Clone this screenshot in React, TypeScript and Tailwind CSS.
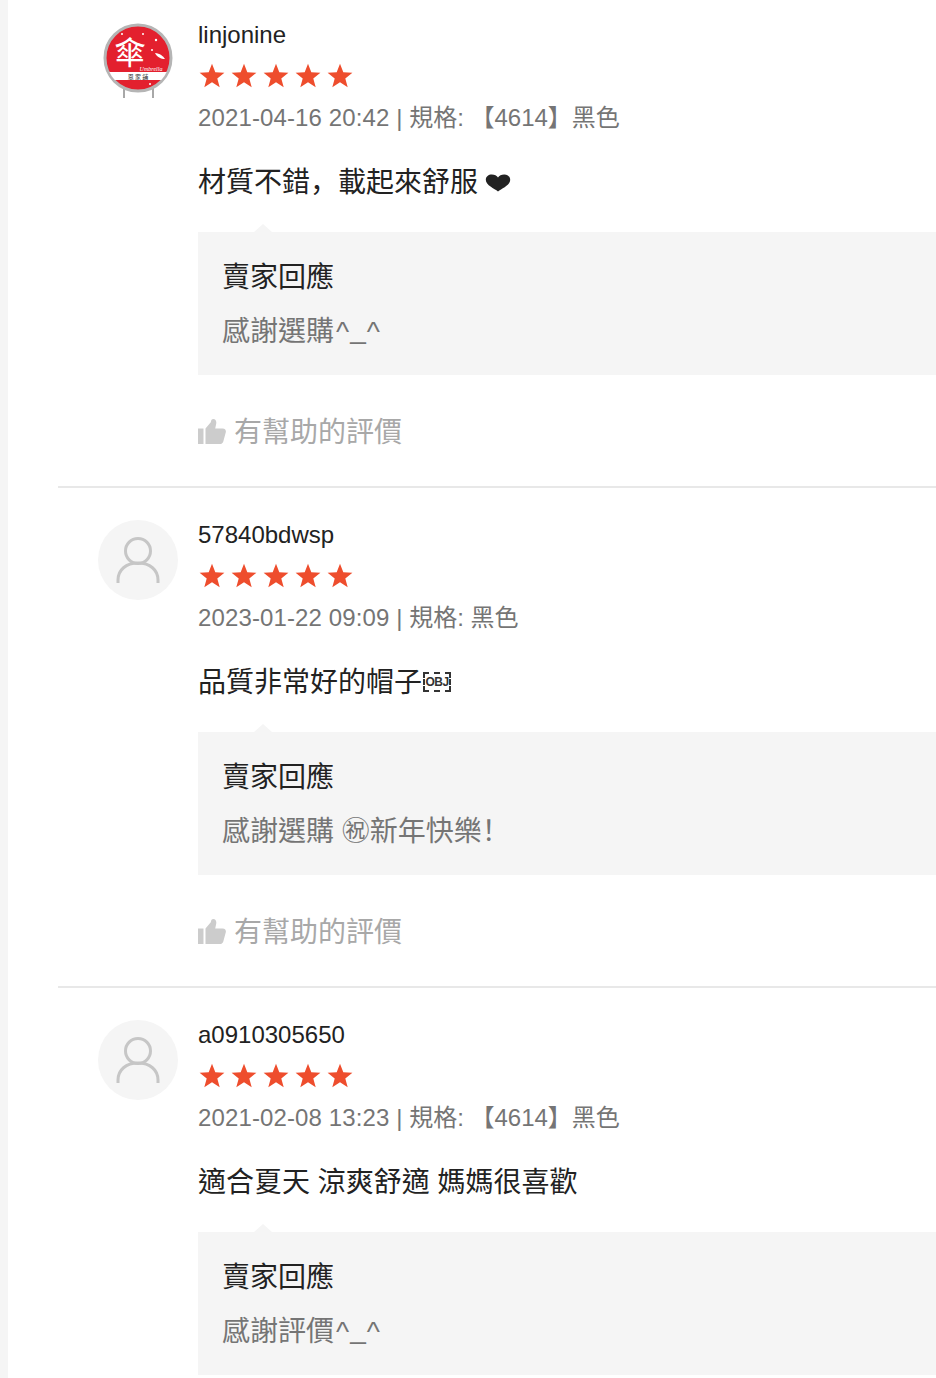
const font = "font-['Liberation_Sans','Noto_Sans_CJK_TC',sans-serif]";
const scPunct = "font-['Noto_Sans_CJK_SC',sans-serif] leading-none";

type Review = {
  user: string;
  logo?: boolean;
  date: string;
  spec: string;
  comment: React.ReactNode;
  reply: React.ReactNode;
};

function Smiley() {
  return (
    <span className="ml-[2px] tracking-[1px]">
      ^<span className="relative top-[-3px]">_</span>^
    </span>
  );
}

const reviews: Review[] = [
  {
    user: 'linjonine',
    logo: true,
    date: '2021-04-16 20:42',
    spec: '【4614】黑色',
    comment: (
      <>
        材質不錯<span className={scPunct}>，</span>載起來舒服
        <span className="ml-[7px] inline-block h-5 align-[-1px]">
          <Heart />
        </span>
      </>
    ),
    reply: (
      <>
        感謝選購
        <Smiley />
      </>
    ),
  },
  {
    user: '57840bdwsp',
    date: '2023-01-22 09:09',
    spec: '黑色',
    comment: (
      <>
        品質非常好的帽子
        <ObjMark />
      </>
    ),
    reply: (
      <>
        感謝選購 ㊗新年快樂<span className={scPunct}>！</span>
      </>
    ),
  },
  {
    user: 'a0910305650',
    date: '2021-02-08 13:23',
    spec: '【4614】黑色',
    comment: '適合夏天 涼爽舒適 媽媽很喜歡',
    reply: (
      <>
        感謝評價
        <Smiley />
      </>
    ),
  },
];

function Heart() {
  return (
    <svg width="26" height="20" viewBox="0 0 26 20" className="block">
      <path
        d="M13 18.500C9.500 15.500.8 12.500.8 6.800.8 3.400 3.600 1.400 6.800 1.400c2.800 0 5 1 6.200 3.100 1.200-2.100 3.400-3.100 6.200-3.100 3.200 0 6 2 6 5.400 0 5.700-8.700 8.700-12.200 11.700z"
        fill="#222"
      />
    </svg>
  );
}

function ObjMark() {
  return (
    <span className="relative top-[-7px] ml-[1px] inline-flex h-[20px] w-[28px] items-center justify-center border-2 border-dashed border-[#333] align-[-1px] font-['Liberation_Sans',sans-serif] text-[12px] leading-none font-bold tracking-[-0.5px] text-[#333]">
      OBJ
    </span>
  );
}

function Star() {
  return (
    <svg width="26" height="26" viewBox="0 0 26 26" className="block">
      <path
        d="M13 .8l3.300 8.500 9.100.500-7.100 5.700 2.400 8.800L13 19.300l-7.700 5 2.400-8.800L.6 9.800l9.100-.5z"
        fill="#ee4d2d"
      />
    </svg>
  );
}

function Logo() {
  return (
    <svg width="80" height="80" viewBox="0 0 80 80" className="block">
      <defs>
        <clipPath id="logo-face">
          <circle cx="40" cy="38" r="32" />
        </clipPath>
      </defs>
      <path d="M26 68v10M55 68v10" stroke="#a8a8a8" strokeWidth="2" />
      <circle cx="40" cy="38" r="33" fill="#e3202e" stroke="#b5b5b5" strokeWidth="3" />
      <rect x="8" y="52" width="64" height="8" fill="#fff" clipPath="url(#logo-face)" />
      <text
        x="32"
        y="44"
        textAnchor="middle"
        fill="#fff"
        fontSize="32"
        fontFamily="'Noto Sans CJK TC',sans-serif"
      >
        傘
      </text>
      <text x="53" y="51" textAnchor="middle" fill="#fff" fontSize="6" fontStyle="italic" fontFamily="'Liberation Serif',serif">
        Umbrella
      </text>
      <text x="40" y="58.500" textAnchor="middle" fill="#333" fontSize="6" fontFamily="'Noto Sans CJK TC',sans-serif">
        恩 家 鋪
      </text>
      <path d="M57 33c5 .5 8 3 10 6-4 0-8-2-10-6z" fill="#fff" />
      <circle cx="45" cy="14" r="1" fill="#fff" />
      <circle cx="58" cy="20" r="1.200" fill="#fff" />
      <circle cx="54" cy="30" r="1" fill="#fff" />
      <circle cx="24" cy="14" r="1" fill="#fff" />
      <circle cx="52" cy="64" r="1" fill="#fff" />
    </svg>
  );
}

function DefaultAvatar() {
  return (
    <div className="flex h-20 w-20 items-center justify-center rounded-full bg-[#f5f5f5]">
      <svg width="44" height="48" viewBox="0 0 44 48" fill="none" stroke="#c6c6c6" strokeWidth="3">
        <circle cx="22" cy="15" r="12.500" />
        <path d="M2 47v-3c0-10 8-17 20-17s20 7 20 17v3" />
      </svg>
    </div>
  );
}

function ThumbUp() {
  return (
    <svg width="28" height="26" viewBox="0 0 28 26" className="mt-[-3px] block" fill="#cccccc">
      <path d="M0 9.500h5.500V25H0z" />
      <path d="M7.500 9.500l5.300-6.300c.3-2 1-3.200 2.500-3.200 2.300 0 3.400 2.200 2.900 4.700L17.200 9.500h7.600c2.100 0 3.500 1.700 3 3.700l-2.500 9.200c-.4 1.500-1.700 2.600-3.300 2.600H7.500z" />
    </svg>
  );
}

function ReviewItem({ review, last }: { review: Review; last: boolean }) {
  return (
    <div className={`ml-[50px] pl-10 ${last ? '' : 'h-[468px] border-b-2 border-[#e8e8e8]'}`}>
      <div className="flex gap-5">
        <div className="h-20 w-20 shrink-0">{review.logo ? <Logo /> : <DefaultAvatar />}</div>
        <div className="min-w-0 flex-1">
          <div className="mt-[1px] h-7 text-[24px] leading-7 text-[#222]">{review.user}</div>
          <div className="mt-[14px] ml-[1px] flex h-[26px] gap-[6px]">
            {[0, 1, 2, 3, 4].map((i) => (
              <Star key={i} />
            ))}
          </div>
          <div className="mt-[15px] h-7 text-[24px] leading-7 whitespace-nowrap text-[#757575]">
            <span className="tracking-[0.13px]">{review.date}</span> | 規格: {review.spec}
          </div>
          <div className="mt-[33px] h-9 text-[28px] leading-9 whitespace-nowrap text-[#222]">{review.comment}</div>
          <div className="relative mt-[31px] h-[143px] bg-[#f5f5f5] pt-[28px] pl-6">
            <div className="absolute top-[-8px] left-[56px] h-0 w-0 border-x-[9px] border-b-[8px] border-x-transparent border-b-[#f5f5f5]" />
            <div className="h-9 text-[28px] leading-9 text-[#222]">賣家回應</div>
            <div className="mt-[18px] h-9 text-[28px] leading-9 whitespace-nowrap text-[#757575]">{review.reply}</div>
          </div>
          {!last && (
            <div className="mt-[40px] flex h-9 items-center gap-2 text-[28px] leading-9 text-[#a8a8a8]">
              <ThumbUp />
              <span>有幫助的評價</span>
            </div>
          )}
        </div>
      </div>
    </div>
  );
}

export default function App() {
  return (
    <div className={`h-[1378px] w-[936px] overflow-hidden bg-white ${font}`}>
      <div className="h-full border-l-8 border-[#f5f5f5] pt-5">
        {reviews.map((review, i) => (
          <div key={review.user} className={i > 0 ? 'pt-[32px]' : ''}>
            <ReviewItem review={review} last={i === reviews.length - 1} />
          </div>
        ))}
      </div>
    </div>
  );
}
